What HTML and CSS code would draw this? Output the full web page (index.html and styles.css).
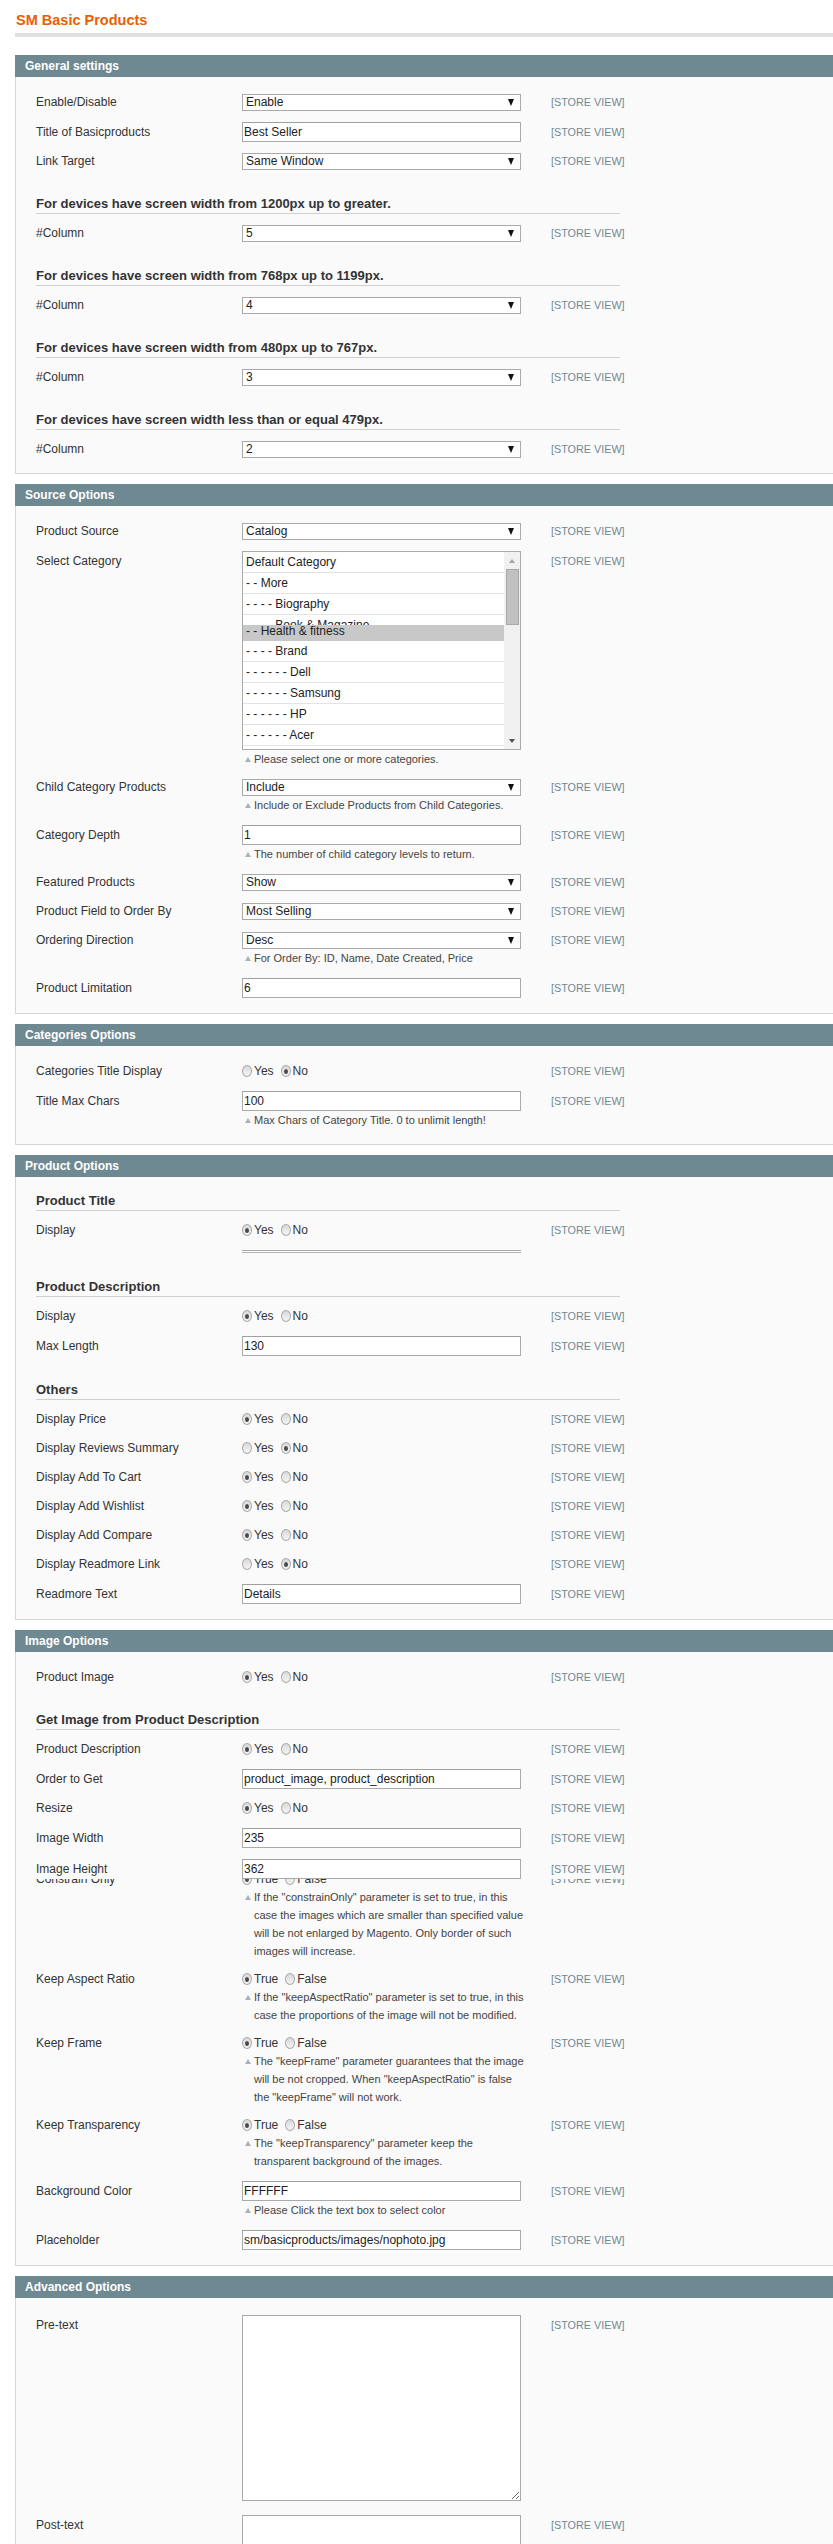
FILE: index.html
```html
<!DOCTYPE html>
<html>
<head>
<meta charset="utf-8">
<title>SM Basic Products</title>
<link rel="stylesheet" href="styles.css">
</head>
<body>
<div class="page">
  <h3 class="page-title">SM Basic Products</h3>

  <div class="section">
    <div class="sec-head">General settings</div>
    <div class="sec-body">
      <div class="row r-sel"><div class="lbl">Enable/Disable</div><div class="field"><div class="select">Enable</div></div><div class="scope">[STORE VIEW]</div></div>
      <div class="row r-inp"><div class="lbl">Title of Basicproducts</div><div class="field"><div class="input">Best Seller</div></div><div class="scope">[STORE VIEW]</div></div>
      <div class="row r-sel"><div class="lbl">Link Target</div><div class="field"><div class="select">Same Window</div></div><div class="scope">[STORE VIEW]</div></div>
      <h4 class="subhead">For devices have screen width from 1200px up to greater.</h4>
      <div class="row r-sel"><div class="lbl">#Column</div><div class="field"><div class="select">5</div></div><div class="scope">[STORE VIEW]</div></div>
      <h4 class="subhead">For devices have screen width from 768px up to 1199px.</h4>
      <div class="row r-sel"><div class="lbl">#Column</div><div class="field"><div class="select">4</div></div><div class="scope">[STORE VIEW]</div></div>
      <h4 class="subhead">For devices have screen width from 480px up to 767px.</h4>
      <div class="row r-sel"><div class="lbl">#Column</div><div class="field"><div class="select">3</div></div><div class="scope">[STORE VIEW]</div></div>
      <h4 class="subhead">For devices have screen width less than or equal 479px.</h4>
      <div class="row r-sel"><div class="lbl">#Column</div><div class="field"><div class="select">2</div></div><div class="scope">[STORE VIEW]</div></div>
    </div>
  </div>

  <div class="section">
    <div class="sec-head">Source Options</div>
    <div class="sec-body">
      <div class="row r-sel"><div class="lbl">Product Source</div><div class="field"><div class="select">Catalog</div></div><div class="scope">[STORE VIEW]</div></div>
      <div class="row r-multi"><div class="lbl">Select Category</div>
        <div class="field">
          <div class="multi">
            <div class="multi-list">
              <div class="mi">Default Category</div>
              <div class="mi">- - More</div>
              <div class="mi">- - - - Biography</div>
              <div class="mi">- - - - Book &amp; Magazine</div>
              <div class="mi sel">- - Health &amp; fitness</div>
              <div class="mi">- - - - Brand</div>
              <div class="mi">- - - - - - Dell</div>
              <div class="mi">- - - - - - Samsung</div>
              <div class="mi">- - - - - - HP</div>
              <div class="mi">- - - - - - Acer</div>
            </div>
            <div class="sb">
              <div class="sb-btn"><span class="tri-up"></span></div>
              <div class="thumb"></div>
              <div class="sb-gap"></div>
              <div class="sb-btn"><span class="tri-down"></span></div>
            </div>
          </div>
          <p class="note"><span class="nt"></span><span>Please select one or more categories.</span></p>
        </div>
        <div class="scope">[STORE VIEW]</div></div>
      <div class="row r-sel"><div class="lbl">Child Category Products</div><div class="field"><div class="select">Include</div><p class="note"><span class="nt"></span><span>Include or Exclude Products from Child Categories.</span></p></div><div class="scope">[STORE VIEW]</div></div>
      <div class="row r-inp"><div class="lbl">Category Depth</div><div class="field"><div class="input">1</div><p class="note"><span class="nt"></span><span>The number of child category levels to return.</span></p></div><div class="scope">[STORE VIEW]</div></div>
      <div class="row r-sel"><div class="lbl">Featured Products</div><div class="field"><div class="select">Show</div></div><div class="scope">[STORE VIEW]</div></div>
      <div class="row r-sel next"><div class="lbl">Product Field to Order By</div><div class="field"><div class="select">Most Selling</div></div><div class="scope">[STORE VIEW]</div></div>
      <div class="row r-sel next"><div class="lbl">Ordering Direction</div><div class="field"><div class="select">Desc</div><p class="note"><span class="nt"></span><span>For Order By: ID, Name, Date Created, Price</span></p></div><div class="scope">[STORE VIEW]</div></div>
      <div class="row r-inp"><div class="lbl">Product Limitation</div><div class="field"><div class="input">6</div></div><div class="scope">[STORE VIEW]</div></div>
    </div>
  </div>

  <div class="section">
    <div class="sec-head">Categories Options</div>
    <div class="sec-body">
      <div class="row r-rad"><div class="lbl">Categories Title Display</div><div class="field"><div class="radios"><span class="radio"></span><span class="opt">Yes</span><span class="radio on"></span><span class="opt">No</span></div></div><div class="scope">[STORE VIEW]</div></div>
      <div class="row r-inp"><div class="lbl">Title Max Chars</div><div class="field"><div class="input">100</div><p class="note"><span class="nt"></span><span>Max Chars of Category Title. 0 to unlimit length!</span></p></div><div class="scope">[STORE VIEW]</div></div>
    </div>
  </div>

  <div class="section">
    <div class="sec-head">Product Options</div>
    <div class="sec-body">
      <h4 class="subhead">Product Title</h4>
      <div class="row r-rad"><div class="lbl">Display</div><div class="field"><div class="radios"><span class="radio on"></span><span class="opt">Yes</span><span class="radio"></span><span class="opt">No</span></div></div><div class="scope">[STORE VIEW]</div></div>
      <div class="row r-col"><div class="lbl"></div><div class="field"><div class="collapsed"></div></div><div class="scope"></div></div>
      <h4 class="subhead">Product Description</h4>
      <div class="row r-rad"><div class="lbl">Display</div><div class="field"><div class="radios"><span class="radio on"></span><span class="opt">Yes</span><span class="radio"></span><span class="opt">No</span></div></div><div class="scope">[STORE VIEW]</div></div>
      <div class="row r-inp"><div class="lbl">Max Length</div><div class="field"><div class="input">130</div></div><div class="scope">[STORE VIEW]</div></div>
      <h4 class="subhead">Others</h4>
      <div class="row r-rad"><div class="lbl">Display Price</div><div class="field"><div class="radios"><span class="radio on"></span><span class="opt">Yes</span><span class="radio"></span><span class="opt">No</span></div></div><div class="scope">[STORE VIEW]</div></div>
      <div class="row r-rad next"><div class="lbl">Display Reviews Summary</div><div class="field"><div class="radios"><span class="radio"></span><span class="opt">Yes</span><span class="radio on"></span><span class="opt">No</span></div></div><div class="scope">[STORE VIEW]</div></div>
      <div class="row r-rad next"><div class="lbl">Display Add To Cart</div><div class="field"><div class="radios"><span class="radio on"></span><span class="opt">Yes</span><span class="radio"></span><span class="opt">No</span></div></div><div class="scope">[STORE VIEW]</div></div>
      <div class="row r-rad next"><div class="lbl">Display Add Wishlist</div><div class="field"><div class="radios"><span class="radio on"></span><span class="opt">Yes</span><span class="radio"></span><span class="opt">No</span></div></div><div class="scope">[STORE VIEW]</div></div>
      <div class="row r-rad next"><div class="lbl">Display Add Compare</div><div class="field"><div class="radios"><span class="radio on"></span><span class="opt">Yes</span><span class="radio"></span><span class="opt">No</span></div></div><div class="scope">[STORE VIEW]</div></div>
      <div class="row r-rad next"><div class="lbl">Display Readmore Link</div><div class="field"><div class="radios"><span class="radio"></span><span class="opt">Yes</span><span class="radio on"></span><span class="opt">No</span></div></div><div class="scope">[STORE VIEW]</div></div>
      <div class="row r-inp"><div class="lbl">Readmore Text</div><div class="field"><div class="input">Details</div></div><div class="scope">[STORE VIEW]</div></div>
    </div>
  </div>

  <div class="section">
    <div class="sec-head">Image Options</div>
    <div class="sec-body">
      <div class="row r-rad"><div class="lbl">Product Image</div><div class="field"><div class="radios"><span class="radio on"></span><span class="opt">Yes</span><span class="radio"></span><span class="opt">No</span></div></div><div class="scope">[STORE VIEW]</div></div>
      <h4 class="subhead">Get Image from Product Description</h4>
      <div class="row r-rad"><div class="lbl">Product Description</div><div class="field"><div class="radios"><span class="radio on"></span><span class="opt">Yes</span><span class="radio"></span><span class="opt">No</span></div></div><div class="scope">[STORE VIEW]</div></div>
      <div class="row r-inp"><div class="lbl">Order to Get</div><div class="field"><div class="input">product_image, product_description</div></div><div class="scope">[STORE VIEW]</div></div>
      <div class="row r-rad"><div class="lbl">Resize</div><div class="field"><div class="radios"><span class="radio on"></span><span class="opt">Yes</span><span class="radio"></span><span class="opt">No</span></div></div><div class="scope">[STORE VIEW]</div></div>
      <div class="row r-inp"><div class="lbl">Image Width</div><div class="field"><div class="input">235</div></div><div class="scope">[STORE VIEW]</div></div>
      <div class="row r-inp row-over"><div class="lbl">Image Height</div><div class="field"><div class="input">362</div></div><div class="scope">[STORE VIEW]</div></div>
      <div class="row r-rad row-under"><div class="lbl">Constrain Only</div><div class="field"><div class="radios"><span class="radio on"></span><span class="opt">True</span><span class="radio"></span><span class="opt">False</span></div><p class="note"><span class="nt"></span><span>If the "constrainOnly" parameter is set to true, in this case the images which are smaller than specified value will be not enlarged by Magento. Only border of such images will increase.</span></p></div><div class="scope">[STORE VIEW]</div></div>
      <div class="row r-rad"><div class="lbl">Keep Aspect Ratio</div><div class="field"><div class="radios"><span class="radio on"></span><span class="opt">True</span><span class="radio"></span><span class="opt">False</span></div><p class="note"><span class="nt"></span><span>If the "keepAspectRatio" parameter is set to true, in this case the proportions of the image will not be modified.</span></p></div><div class="scope">[STORE VIEW]</div></div>
      <div class="row r-rad"><div class="lbl">Keep Frame</div><div class="field"><div class="radios"><span class="radio on"></span><span class="opt">True</span><span class="radio"></span><span class="opt">False</span></div><p class="note"><span class="nt"></span><span>The "keepFrame" parameter guarantees that the image will be not cropped. When "keepAspectRatio" is false the "keepFrame" will not work.</span></p></div><div class="scope">[STORE VIEW]</div></div>
      <div class="row r-rad"><div class="lbl">Keep Transparency</div><div class="field"><div class="radios"><span class="radio on"></span><span class="opt">True</span><span class="radio"></span><span class="opt">False</span></div><p class="note"><span class="nt"></span><span>The "keepTransparency" parameter keep the transparent background of the images.</span></p></div><div class="scope">[STORE VIEW]</div></div>
      <div class="row r-inp"><div class="lbl">Background Color</div><div class="field"><div class="input">FFFFFF</div><p class="note"><span class="nt"></span><span>Please Click the text box to select color</span></p></div><div class="scope">[STORE VIEW]</div></div>
      <div class="row r-inp"><div class="lbl">Placeholder</div><div class="field"><div class="input">sm/basicproducts/images/nophoto.jpg</div></div><div class="scope">[STORE VIEW]</div></div>
    </div>
  </div>

  <div class="section">
    <div class="sec-head">Advanced Options</div>
    <div class="sec-body">
      <div class="row r-inp"><div class="lbl">Pre-text</div><div class="field"><textarea class="ta"></textarea></div><div class="scope">[STORE VIEW]</div></div>
      <div class="row r-inp"><div class="lbl">Post-text</div><div class="field"><textarea class="ta"></textarea></div><div class="scope">[STORE VIEW]</div></div>
    </div>
  </div>
</div>
</body>
</html>
```

FILE: styles.css
```css
html {
  overflow: hidden;
}

body {
  margin: 0;
  background: #fff;
  font-family: "Liberation Sans", Arial, sans-serif;
  font-size: 12px;
  color: #2f2f2f;
}

.page {
  width: 840px;
  padding-left: 15px;
}

.page-title {
  margin: 0 0 18px;
  padding: 10px 0 3px 1px;
  font-size: 14.5px;
  line-height: 20px;
  font-weight: bold;
  color: #eb5e00;
  border-bottom: 4px solid #dfdfdf;
}

.section {
  margin-bottom: 10px;
}

.sec-head {
  height: 22px;
  line-height: 22px;
  padding-left: 10px;
  background: #6f8992;
  color: #fff;
  font-weight: bold;
  font-size: 12px;
}

.sec-body {
  background: #fafafa;
  border: 1px solid #d6d6d6;
  border-top: 0;
  padding: 6px 0 15px 20px;
}

.row {
  display: grid;
  grid-template-columns: 206px 279px auto;
  align-items: start;
  padding-top: 11px;
}

.row.next {
  padding-top: 12px;
}

.r-sel { --h: 17px; }
.r-inp { --h: 20px; }
.r-rad { --h: 16px; }
.r-multi { --h: 20px; }
.r-col { --h: 3px; }

.lbl {
  color: #333;
  line-height: var(--h);
  white-space: nowrap;
}

.scope {
  margin-left: 30px;
  color: #6f8992;
  font-size: 10.8px;
  line-height: var(--h);
  white-space: nowrap;
}

.field {
  width: 279px;
}

.select {
  box-sizing: border-box;
  height: 17px;
  border: 1px solid #aaa;
  background: #fff;
  display: flex;
  align-items: center;
  justify-content: space-between;
  padding: 0 6px 0 3px;
  line-height: 15px;
  color: #222;
}

.select::after {
  content: "";
  width: 0;
  height: 0;
  border-left: 3.5px solid transparent;
  border-right: 3.5px solid transparent;
  border-top: 7px solid #111;
}

.input {
  box-sizing: border-box;
  height: 20px;
  border: 1px solid #aaa;
  border-top-color: #a0a0a0;
  background: #fff;
  padding-left: 1px;
  line-height: 18px;
  color: #222;
  white-space: nowrap;
  overflow: hidden;
}

.collapsed {
  box-sizing: border-box;
  height: 3px;
  border-top: 1px solid #aaa;
  border-bottom: 1px solid #b4b4b4;
  background: #fff;
}

.radios {
  display: flex;
  align-items: center;
  height: 16px;
  padding-bottom: 1px;
  color: #333;
}

.radio {
  box-sizing: border-box;
  width: 10px;
  height: 12px;
  margin-right: 2px;
  border: 1px solid #a8a8a8;
  border-radius: 50%;
  background: linear-gradient(#d8d8d8, #f6f6f6);
  display: flex;
  align-items: center;
  justify-content: center;
}

.radio.on::after {
  content: "";
  width: 4px;
  height: 5px;
  border-radius: 50%;
  background: #4a4a4a;
}

.opt {
  margin-right: 7px;
}

.note {
  width: 286px;
  margin: 0;
  display: flex;
  font-size: 11px;
  line-height: 18px;
  color: #444;
}

.nt {
  flex: 0 0 auto;
  width: 0;
  height: 0;
  margin: 7px 3px 0 3px;
  border-left: 3px solid transparent;
  border-right: 3px solid transparent;
  border-bottom: 5px solid #a9b1b5;
}

.subhead {
  width: 584px;
  margin: 25px 0 0;
  padding: 0 0 1px;
  font-size: 13px;
  line-height: 17px;
  font-weight: bold;
  color: #333;
  border-bottom: 1px solid #cfcfcf;
}

.sec-body > .subhead:first-child {
  margin-top: 9px;
}

/* multiselect */
.multi {
  box-sizing: border-box;
  height: 199px;
  border: 1px solid #aaa;
  background: #fff;
  display: flex;
  overflow: hidden;
}

.multi-list {
  flex: 1;
  overflow: hidden;
}

.mi {
  box-sizing: border-box;
  height: 21px;
  line-height: 20px;
  padding-left: 3px;
  border-bottom: 1px solid #e3e3e3;
  white-space: nowrap;
  color: #222;
}

.mi.sel {
  position: relative;
  height: 16px;
  line-height: 13px;
  margin-top: -11px;
  border-bottom: 0;
  background: #c8c8c8;
}

.sb {
  width: 16px;
  background: #f1f1f1;
  display: flex;
  flex-direction: column;
  align-items: center;
}

.sb-btn {
  height: 17px;
  display: flex;
  align-items: center;
  justify-content: center;
}

.tri-up {
  width: 0;
  height: 0;
  border-left: 3.5px solid transparent;
  border-right: 3.5px solid transparent;
  border-bottom: 4px solid #a3a3a3;
}

.tri-down {
  width: 0;
  height: 0;
  border-left: 3.5px solid transparent;
  border-right: 3.5px solid transparent;
  border-top: 4px solid #505050;
}

.thumb {
  box-sizing: border-box;
  width: 13px;
  height: 56px;
  background: #c1c1c1;
  border: 1px solid #a9a9a9;
}

.sb-gap {
  flex: 1;
}

/* overlapping rows (Image Height over Constrain Only) */
.row-over {
  position: relative;
  z-index: 1;
  background: #fafafa;
}

.row-under {
  margin-top: -8px;
  padding-top: 0;
}

.ta {
  box-sizing: border-box;
  width: 279px;
  height: 186px;
  margin: 0;
  border: 1px solid #aaa;
  background: #fff;
  padding: 0;
  resize: both;
}
```
